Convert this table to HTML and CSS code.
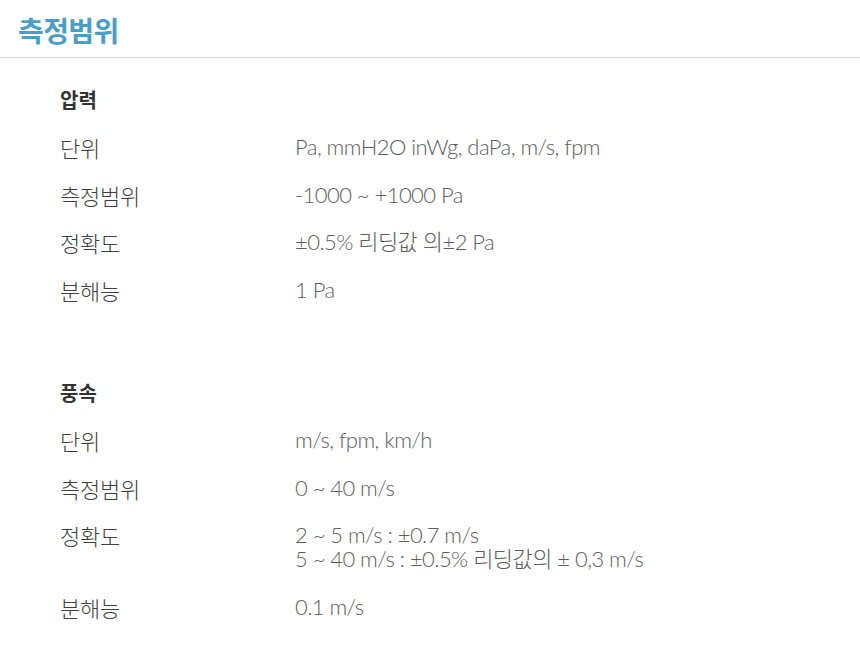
FILE: index.html
```html
<!DOCTYPE html>
<html lang="ko">
<head>
<meta charset="utf-8">
<link rel="stylesheet" href="styles.css">
</head>
<body>
<header class="title-bar">
  <h1 class="title">측정범위</h1>
</header>
<main class="content">
  <section class="group">
    <h2 class="group-title">압력</h2>
    <dl class="spec">
      <div class="row"><dt>단위</dt><dd>Pa, mmH2O inWg, daPa, m/s, fpm</dd></div>
      <div class="row"><dt>측정범위</dt><dd>-1000 ~ +1000 Pa</dd></div>
      <div class="row"><dt>정확도</dt><dd>±0.5% 리딩값 의±2 Pa</dd></div>
      <div class="row"><dt>분해능</dt><dd>1 Pa</dd></div>
    </dl>
  </section>
  <section class="group">
    <h2 class="group-title">풍속</h2>
    <dl class="spec">
      <div class="row"><dt>단위</dt><dd>m/s, fpm, km/h</dd></div>
      <div class="row"><dt>측정범위</dt><dd>0 ~ 40 m/s</dd></div>
      <div class="row"><dt>정확도</dt><dd class="multi"><span>2 ~ 5 m/s : ±0.7 m/s</span><span>5 ~ 40 m/s : ±0.5% 리딩값의 ± 0,3 m/s</span></dd></div>
      <div class="row"><dt>분해능</dt><dd>0.1 m/s</dd></div>
    </dl>
  </section>
</main>
</body>
</html>
```

FILE: styles.css
```css
* { box-sizing: border-box; }
html, body { margin: 0; padding: 0; background: #fff; }
body {
  font-family: "Noto Sans CJK KR", "Noto Sans", sans-serif;
  color: #444;
  width: 860px;
}
.title-bar {
  border-bottom: 1px solid #dcdcdc;
  padding: 8px 18px 0;
  height: 58px;
}
.title {
  margin: 0;
  font-size: 28px;
  line-height: 44px;
  font-weight: 700;
  color: #4b9ec7;
  letter-spacing: -0.6px;
}
.content {
  padding: 30px 0 0 60px;
}
.group { margin-bottom: 79px; }
.group-title {
  margin: 0;
  font-size: 20px;
  line-height: 24px;
  font-weight: 700;
  color: #333;
}
.spec {
  margin: 0;
  display: flex;
  flex-direction: column;
}
.row {
  display: flex;
  margin-top: 23.7px;
}
.row:first-child { margin-top: 23px; }
.row dt {
  width: 235px;
  font-size: 22px;
  font-weight: 300;
  color: #3f3f3f;
  line-height: 24px;
  letter-spacing: -0.2px;
}
.row dd {
  margin: 0;
  font-family: "Lato", "Noto Sans CJK KR", sans-serif;
  font-size: 22px;
  font-weight: 300;
  color: #5e5e5e;
  letter-spacing: -0.55px;
  line-height: 24px;
}
.row dd.multi { display: flex; flex-direction: column; }
```
